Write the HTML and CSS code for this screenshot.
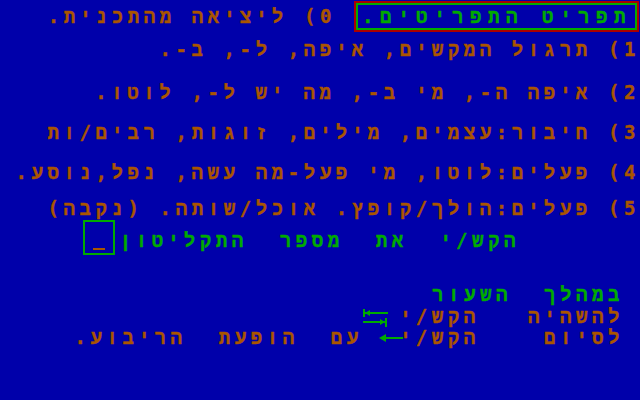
FILE: index.html
```html
<!DOCTYPE html>
<html lang="he">
<head>
<meta charset="utf-8">
<title>תפריט התפריטים</title>
<link rel="stylesheet" href="styles.css">
</head>
<body>
<div class="screen" dir="rtl">
  <div class="top">
    <div class="title-box"><div class="title-inner">תפריט התפריטים.</div></div>
    <div class="line brown zero">0) ליציאה מהתכנית.</div>
  </div>
  <div class="line brown r1">1) תרגול המקשים, איפה, ל-, ב-.</div>
  <div class="line brown r2">2) איפה ה-, מי ב-, מה יש ל-, לוטו.</div>
  <div class="line brown r3">3) חיבור:עצמים, מילים, זוגות, רבים/ות</div>
  <div class="line brown r4">4) פעלים:לוטו, מי פעל-מה עשה, נפל,נוסע.</div>
  <div class="line brown r5">5) פעלים:הולך/קופץ. אוכל/שותה. (נקבה)</div>
  <div class="prompt">
    <div class="line green">הקש/י  את  מספר  התקליטון</div>
    <div class="cursor-box"><span class="cursor"></span></div>
  </div>
  <div class="line green ra">במהלך  השעור</div>
  <div class="help rb">
    <span class="line brown">להשהיה   הקש/י</span>
    <svg class="tab-icon" width="26" height="18" viewBox="0 0 26 18">
      <rect x="1" y="0" width="2" height="8" fill="#00aa00"/>
      <rect x="3" y="3" width="23" height="2" fill="#00aa00"/>
      <path d="M3 4 L8 1 L8 7 Z" fill="#00aa00"/>
      <rect x="23" y="9" width="2" height="9" fill="#00aa00"/>
      <rect x="1" y="12" width="22" height="2" fill="#00aa00"/>
      <path d="M23 13 L18 10 L18 16 Z" fill="#00aa00"/>
    </svg>
  </div>
  <div class="help rc">
    <span class="line brown">לסיום    הקש/י</span>
    <svg class="arrow-icon" width="24" height="8" viewBox="0 0 24 8">
      <rect x="4" y="3" width="20" height="2" fill="#00aa00"/>
      <path d="M0 4 L7 0 L7 8 Z" fill="#00aa00"/>
    </svg>
    <span class="line brown"> עם  הופעת  הריבוע.</span>
  </div>
</div>
</body>
</html>
```
FILE: styles.css
```css
html, body {
  margin: 0;
  padding: 0;
  background: #0000aa;
}

.screen {
  width: 640px;
  height: 400px;
  background: #0000aa;
  overflow: hidden;
  font-family: "DejaVu Sans Mono", "Liberation Mono", monospace;
  font-weight: bold;
  font-size: 19px;
  line-height: 16px;
}

.line {
  display: block;
  height: 16px;
  line-height: 16px;
  white-space: pre;
  letter-spacing: 4.6px;
  text-align: right;
  -webkit-text-stroke: 0.4px currentColor;
}

.brown { color: #aa5500; }
.green { color: #00aa00; }

.top {
  display: flex;
  align-items: flex-start;
  height: 32px;
}

.title-box {
  margin-top: 1px;
  margin-right: 1px;
  width: 285px;
  height: 31px;
  box-sizing: border-box;
  border: 2px solid #aa0000;
}

.title-inner {
  height: 100%;
  box-sizing: border-box;
  border: 2px solid #00aa00;
  padding-top: 3px;
  padding-right: 3px;
  color: #00aa00;
  white-space: pre;
  line-height: 16px;
  letter-spacing: 6.6px;
  -webkit-text-stroke: 0.4px currentColor;
}

.zero {
  margin-top: 8px;
  margin-right: 18px;
}

.r1 { margin-top: 9px; }
.r2 { margin-top: 27px; }
.r3 { margin-top: 24px; }
.r4 { margin-top: 24px; }
.r5 { margin-top: 20px; }

.prompt {
  display: flex;
  align-items: flex-start;
  margin-top: 4px;
  padding-right: 120px;
  height: 35px;
}

.prompt .line {
  margin-top: 12px;
}

.cursor-box {
  margin-right: 5px;
  width: 32px;
  height: 35px;
  box-sizing: border-box;
  border: 2px solid #00aa00;
  display: flex;
  align-items: flex-end;
  justify-content: center;
  padding-bottom: 3px;
}

.cursor {
  display: block;
  width: 12px;
  height: 2px;
  background: #aa5500;
}

.ra {
  margin-top: 31px;
  padding-right: 16px;
}

.help {
  display: flex;
  align-items: flex-start;
  height: 16px;
  padding-right: 16px;
}

.rb { margin-top: 6px; }
.rc { margin-top: 5px; }

.tab-icon {
  margin-right: 12px;
  margin-top: 1px;
  flex: none;
}

.arrow-icon {
  margin-right: -3px;
  margin-top: 5px;
  flex: none;
}
```
